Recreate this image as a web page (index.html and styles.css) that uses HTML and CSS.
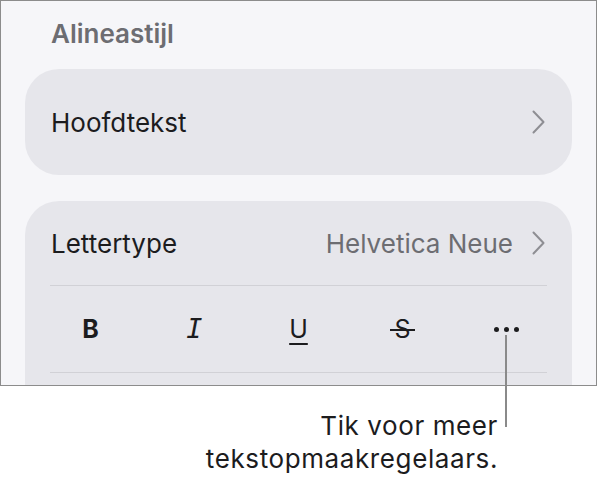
FILE: index.html
```html
<!DOCTYPE html>
<html lang="nl">
<head>
    <meta charset="UTF-8">
    <meta name="viewport" content="width=device-width, initial-scale=1.0">
    <title>Alineastijl</title>
    <link rel="stylesheet" href="styles.css">
</head>
<body>
    <div class="page">
        <div class="screen">
            <div class="section-title">Alineastijl</div>

            <div class="card card-style">
                <div class="row">
                    <span class="label">Hoofdtekst</span>
                    <svg class="chevron" width="13" height="24" viewBox="0 0 13 24"><path d="M1.5 1.5 L11.5 12 L1.5 22.5"/></svg>
                </div>
            </div>

            <div class="card card-font">
                <div class="row row-font">
                    <span class="label">Lettertype</span>
                    <span class="value">Helvetica Neue</span>
                    <svg class="chevron" width="13" height="24" viewBox="0 0 13 24"><path d="M1.5 1.5 L11.5 12 L1.5 22.5"/></svg>
                </div>
                <div class="sep"></div>
                <div class="format-row">
                    <span class="fmt fmt-bold">B</span>
                    <span class="fmt fmt-italic">I</span>
                    <span class="fmt fmt-underline">U</span>
                    <span class="fmt fmt-strike">S</span>
                    <span class="fmt fmt-more"><i></i><i></i><i></i></span>
                </div>
                <div class="sep"></div>
                <div class="row"></div>
            </div>
        </div>

        <!-- annotation line pointing at the "more" button -->
        <div class="callout-line"></div>
        <p class="callout">Tik voor meer<br>tekstopmaakregelaars.</p>
    </div>
</body>
</html>
```

FILE: styles.css
```css
/* Basic Styles */
body {
    margin: 0;
    padding: 0;
    background-color: #ffffff;
    font-family: Inter, "Noto Sans", sans-serif;
    color: #1c1c1e;
}

.page {
    position: relative;
    width: 599px;
    height: 481px;
}

.screen {
    box-sizing: border-box;
    width: 597px;
    height: 386px;
    padding: 18px 24px 0 24px;
    background-color: #f6f6f9;
    border: 1px solid #8c8c8c;
    overflow: hidden;
}

.section-title {
    padding-left: 26px;
    font-size: 26px;
    line-height: 30px;
    font-weight: 600;
    color: #6d6d72;
}

.card {
    background-color: #e6e6eb;
    border-radius: 34px;
}

.card-style {
    margin-top: 20px;
    height: 106px;
    display: flex;
    align-items: center;
    padding: 0 27px 0 26px;
}

.card-style .row {
    flex: 1;
}

.row {
    display: flex;
    align-items: center;
}

.label {
    font-size: 26px;
}

.chevron {
    margin-left: auto;
    fill: none;
    stroke: #8e8e93;
    stroke-width: 2;
    stroke-linecap: round;
    stroke-linejoin: round;
}

.card-font {
    margin-top: 26px;
    height: 260px;
    padding: 0 25px;
}

.row-font {
    height: 84px;
    padding: 0 2px 0 1px;
}

.value {
    margin-left: auto;
    font-size: 26px;
    color: #6d6d72;
}

.row-font .chevron {
    margin-left: 19px;
}

.sep {
    height: 1px;
    background-color: #d1d1d6;
}

.format-row {
    display: grid;
    grid-template-columns: repeat(5, 1fr);
    height: 86px;
    margin: 0 -11.5px;
    align-items: center;
    justify-items: center;
}

.fmt {
    position: relative;
    font-size: 25px;
    line-height: 30px;
    color: #1c1c1e;
}

.fmt-bold {
    font-weight: 700;
}

.fmt-italic {
    font-family: "DejaVu Sans Mono", monospace;
    font-style: oblique;
    font-size: 27px;
}

.fmt-underline {
    text-decoration: underline;
    text-decoration-thickness: 2px;
    text-underline-offset: 5px;
}

.fmt-strike::after {
    content: "";
    position: absolute;
    left: -4px;
    right: -4px;
    top: 15px;
    height: 1.5px;
    background-color: #1c1c1e;
}

.fmt-more {
    display: flex;
    gap: 5px;
}

.fmt-more i {
    width: 5px;
    height: 5px;
    border-radius: 50%;
    background-color: #1c1c1e;
}

.callout-line {
    position: absolute;
    left: 505px;
    top: 335px;
    width: 2px;
    height: 92px;
    background-color: #8a8a8a;
}

.callout {
    margin: 23px 0 0 0;
    padding-right: 101px;
    text-align: right;
    font-size: 26px;
    line-height: 33px;
    letter-spacing: 0.6px;
    color: #1c1c1e;
}
```
